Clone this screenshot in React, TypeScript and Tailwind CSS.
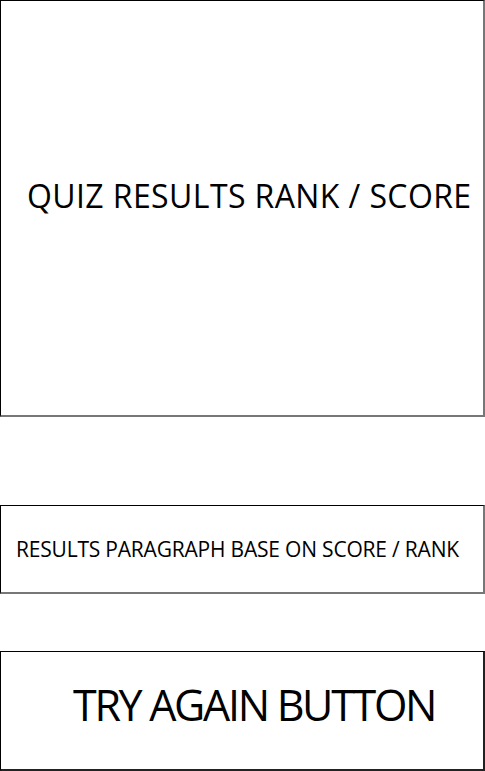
export default function App() {
  return (
    <div className="w-[485px] h-[771px] bg-white flex flex-col font-['Open_Sans',sans-serif] text-black">
      {/* Rank / score panel */}
      <div className="h-[417px] flex items-center pl-[26px] pb-[25px] border-l border-t border-black border-r-2 border-b-2 border-r-[#777] border-b-[#777]">
        <span className="text-[32px] leading-none tracking-[0.4px] whitespace-nowrap">QUIZ RESULTS RANK / SCORE</span>
      </div>

      {/* Results paragraph */}
      <div className="mt-[88px] h-[89px] flex items-center pl-[15px] border-l border-t border-black border-r-2 border-b-2 border-r-[#777] border-b-[#777]">
        <span className="text-[21px] leading-none tracking-[-0.2px] whitespace-nowrap">RESULTS PARAGRAPH BASE ON SCORE / RANK</span>
      </div>

      {/* Try again */}
      <button className="mt-[57px] h-[120px] flex items-center pl-[72px] pb-[13px] border-l border-t border-black border-r-2 border-b-2 border-r-[#222] border-b-[#222] text-left">
        <span className="text-[43px] leading-none tracking-[-2.3px] whitespace-nowrap">TRY AGAIN BUTTON</span>
      </button>
    </div>
  );
}
